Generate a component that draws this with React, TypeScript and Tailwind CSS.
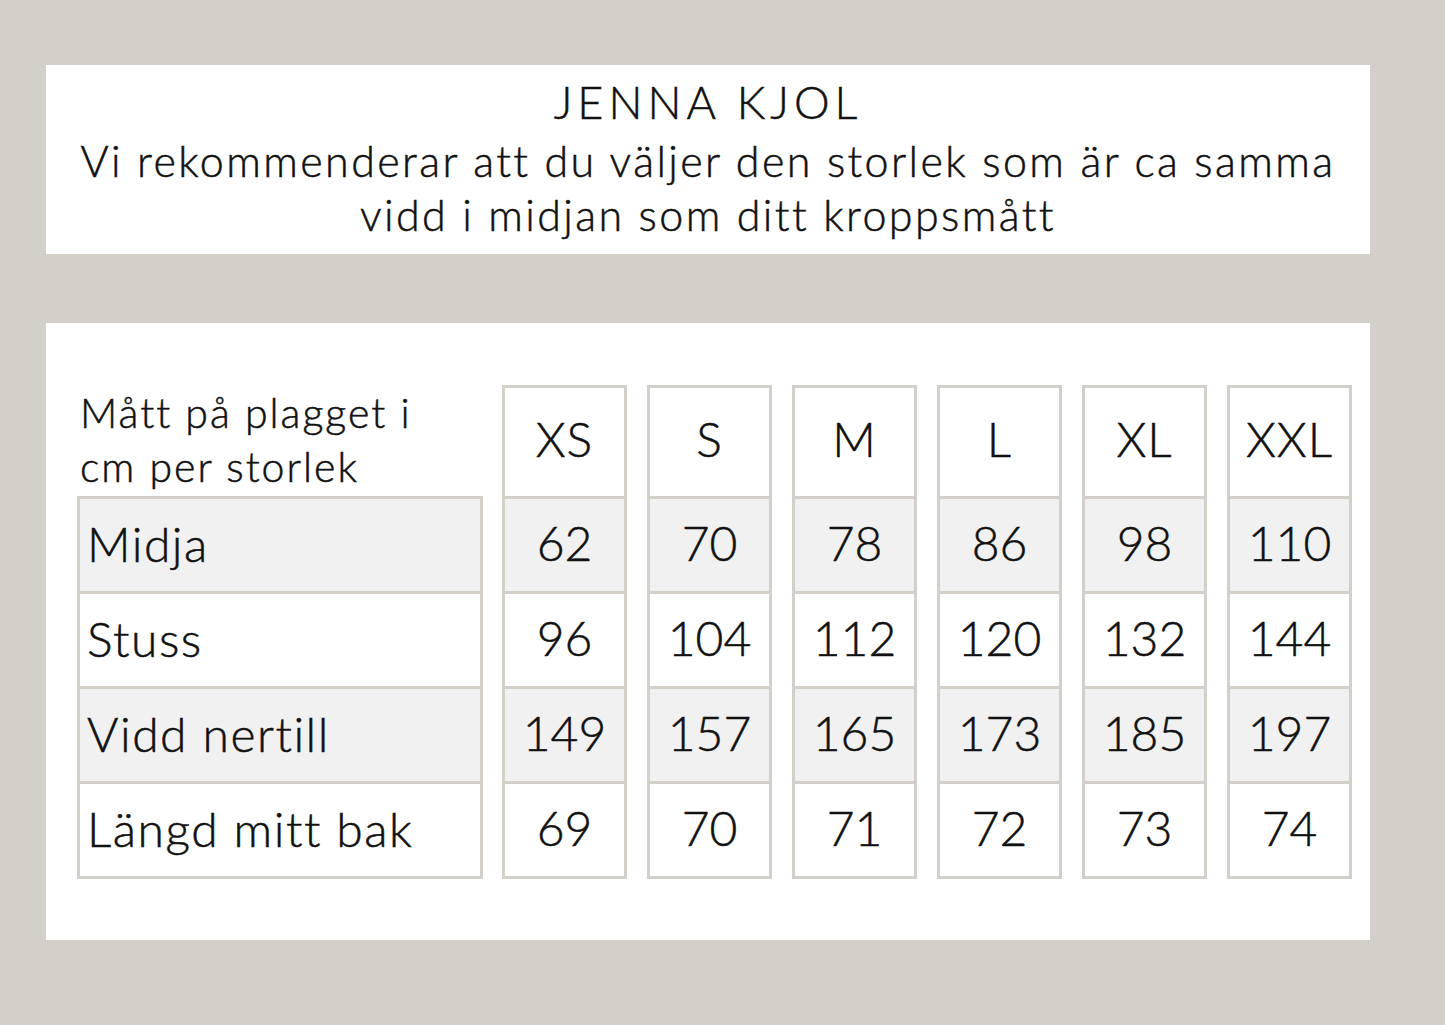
const sizes = ["XS", "S", "M", "L", "XL", "XXL"];

const rows = [
  { label: "Midja", values: ["62", "70", "78", "86", "98", "110"], grey: true },
  { label: "Stuss", values: ["96", "104", "112", "120", "132", "144"], grey: false },
  { label: "Vidd nertill", values: ["149", "157", "165", "173", "185", "197"], grey: true },
  { label: "Längd mitt bak", values: ["69", "70", "71", "72", "73", "74"], grey: false },
];

export default function App() {
  return (
    <div
      className="w-[1445px] h-[1025px] bg-[#d3d0ca] pt-[65px] pl-[46px] text-[#111] font-light [-webkit-text-stroke:0.5px_#111]"
      style={{ fontFamily: "Lato, 'Open Sans', sans-serif" }}
    >
      {/* rubrik */}
      <div className="w-[1324px] h-[189px] bg-white flex flex-col items-center pt-[10px]">
        <h1 className="text-[45px] leading-[55px] tracking-[5px] mb-[4px]">JENNA KJOL</h1>
        <p className="text-[43px] leading-[54px] tracking-[2.4px] text-center">
          Vi rekommenderar att du väljer den storlek som är ca samma
          <br />
          vidd i midjan som ditt kroppsmått
        </p>
      </div>

      {/* tabell */}
      <div className="mt-[69px] w-[1324px] h-[617px] bg-white pt-[62px] pl-[31px] flex items-start gap-[19px]">
        <div className="w-[406px] flex flex-col">
          <div className="h-[111px] pl-[3px] pt-[1px] text-[41px] leading-[54px] tracking-[2px]">
            Mått på plagget i
            <br />
            cm per storlek
          </div>
          <div className="border-[3px] border-[#d3d0ca]">
            {rows.map((r, i) => (
              <div
                key={r.label}
                className={`flex items-center pl-[7px] pb-[3px] text-[48px] tracking-[1.5px] ${
                  i > 0 ? "border-t-[3px] border-[#d3d0ca] h-[95px]" : "h-[92px]"
                } ${r.grey ? "bg-[#f1f1f1]" : "bg-white"}`}
              >
                {r.label}
              </div>
            ))}
          </div>
        </div>

        <div className="flex items-start gap-[20px]">
          {sizes.map((s, ci) => (
            <div key={s} className="w-[125px] border-[3px] border-[#d3d0ca] flex flex-col">
              <div className="h-[108px] flex items-center justify-center pb-[6px] text-[48px] tracking-[1px]">{s}</div>
              {rows.map((r) => (
                <div
                  key={r.label}
                  className={`h-[95px] border-t-[3px] border-[#d3d0ca] flex items-center justify-center pb-[4px] text-[48px] ${
                    r.grey ? "bg-[#f1f1f1]" : "bg-white"
                  }`}
                >
                  {r.values[ci]}
                </div>
              ))}
            </div>
          ))}
        </div>
      </div>
    </div>
  );
}
